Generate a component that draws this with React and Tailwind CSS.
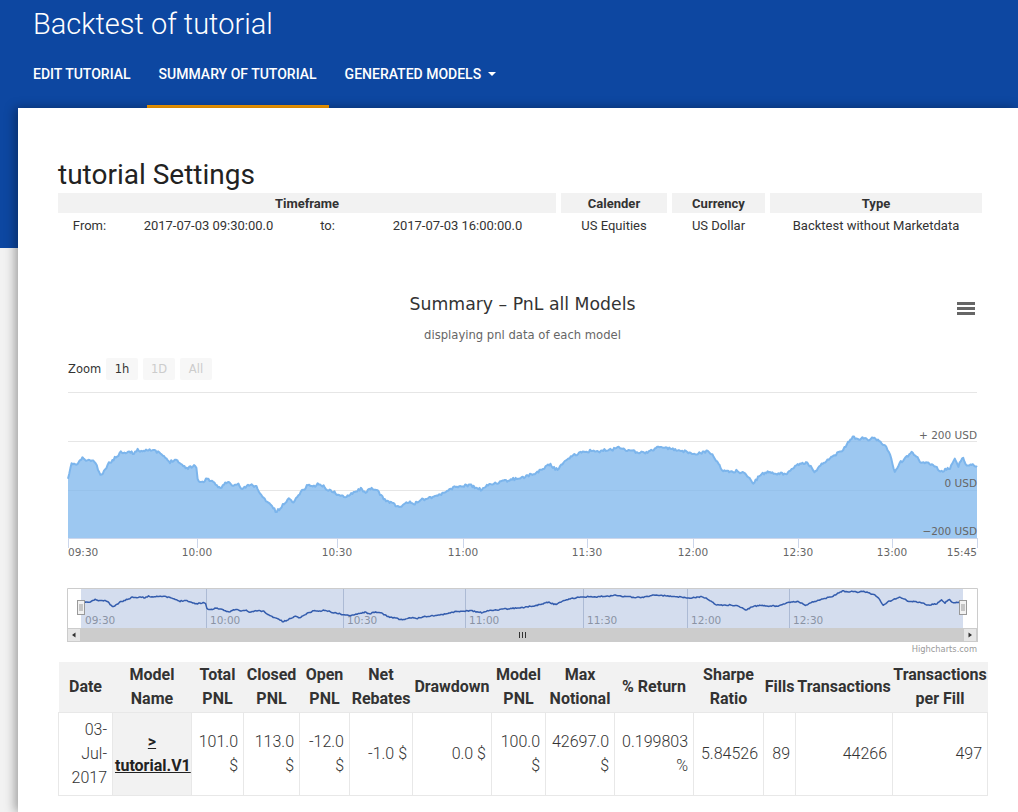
import React from 'react';

// rough shape of the pnl curve (page coordinates), noise is added on top
const KEY = [
  [68, 480], [70, 470], [72, 463], [77, 465], [82, 458], [88, 461], [93, 460], [97, 466], [100, 476], [104, 472],
  [108, 464], [113, 460], [118, 455], [121, 452], [128, 452], [134, 453], [137, 450], [143, 451], [148, 449], [154, 451],
  [160, 453], [165, 458], [170, 462], [175, 459], [178, 461], [183, 466], [188, 468], [193, 466], [196, 465], [198, 481],
  [202, 483], [207, 478], [212, 482], [216, 485], [220, 488], [224, 484], [228, 482], [233, 486], [238, 484], [242, 489],
  [247, 486], [252, 485], [257, 487], [262, 497], [268, 502], [272, 506], [276, 512], [281, 508], [285, 502], [289, 499],
  [294, 502], [299, 494], [304, 489], [309, 484], [313, 487], [318, 484], [323, 486], [328, 490], [334, 492], [338, 495],
  [344, 497], [350, 494], [356, 491], [361, 489], [366, 492], [371, 489], [377, 490], [382, 497], [387, 501], [393, 503],
  [398, 507], [403, 506], [408, 502], [414, 504], [420, 500], [428, 498], [435, 496], [442, 494], [448, 490], [455, 487],
  [462, 486], [470, 485], [476, 488], [482, 490], [488, 485], [495, 483], [502, 482], [510, 480], [518, 478], [525, 477],
  [532, 474], [538, 472], [545, 467], [550, 464], [554, 468], [558, 470], [563, 463], [568, 458], [575, 455], [582, 452],
  [590, 451], [597, 452], [605, 450], [612, 450], [618, 446], [624, 449], [630, 451], [637, 452], [645, 453], [652, 450],
  [658, 447], [665, 448], [672, 449], [680, 451], [688, 452], [695, 454], [700, 453], [708, 451], [713, 455], [717, 462],
  [722, 470], [730, 472], [736, 471], [743, 473], [748, 476], [753, 483], [757, 479], [760, 475], [765, 473], [770, 472],
  [778, 474], [787, 473], [793, 468], [800, 463], [807, 463], [811, 467], [815, 472], [820, 466], [827, 460], [833, 456],
  [840, 452], [846, 446], [850, 440], [853, 437], [858, 440], [863, 438], [868, 440], [873, 438], [878, 440], [882, 443],
  [886, 447], [889, 452], [892, 462], [895, 472], [898, 466], [900, 463], [906, 458], [912, 452], [916, 456], [920, 462],
  [926, 463], [933, 465], [937, 468], [940, 472], [945, 470], [950, 468], [953, 462], [955, 458], [957, 464], [958, 468],
  [961, 460], [963, 457], [965, 462], [967, 467], [972, 465], [977, 467],
];

function interp(x) {
  for (let i = 1; i < KEY.length; i++) {
    if (x <= KEY[i][0]) {
      const [x0, y0] = KEY[i - 1];
      const [x1, y1] = KEY[i];
      return y0 + ((y1 - y0) * (x - x0)) / (x1 - x0 || 1);
    }
  }
  return KEY[KEY.length - 1][1];
}

let seed = 11;
const rand = () => {
  seed = (seed * 16807) % 2147483647;
  return seed / 2147483647;
};

const PTS = [];
for (let x = 68; x < 977; x += 1.2) PTS.push([x, interp(x) + (rand() - 0.5) * 2.6]);
PTS.push([977, interp(977)]);

const LINE = PTS.map(([x, y], i) => `${i ? 'L' : 'M'}${x.toFixed(1)} ${y.toFixed(1)}`).join(' ');
const AREA = `M68 538 L${LINE.slice(1)} L977 538 Z`;
const NAV = PTS.map(
  ([x, y], i) => `${i ? 'L' : 'M'}${(81 + ((x - 68) * 882) / 909).toFixed(1)} ${(591 + (y - 437) * 0.41).toFixed(1)}`
).join(' ');

const XLABELS = [
  { x: 68, t: '09:30', a: 'start' },
  { x: 197, t: '10:00' },
  { x: 337, t: '10:30' },
  { x: 463, t: '11:00' },
  { x: 587, t: '11:30' },
  { x: 693, t: '12:00' },
  { x: 798, t: '12:30' },
  { x: 892, t: '13:00' },
  { x: 977, t: '15:45', a: 'end' },
];

const NAVGRID = [
  [206, '10:00'],
  [343, '10:30'],
  [465, '11:00'],
  [583, '11:30'],
  [687, '12:00'],
  [789, '12:30'],
];

const FONT = "'DejaVu Sans', sans-serif";

function PnlChart() {
  return (
    <svg width="929" height="380" viewBox="58 280 929 380" className="block" fontFamily={FONT}>
      <text x="522.5" y="310" textAnchor="middle" fontSize="17.3" fill="#333">
        Summary – PnL all Models
      </text>
      <text x="522.5" y="339" textAnchor="middle" fontSize="11.6" fill="#666">
        displaying pnl data of each model
      </text>
      {[302, 307, 312].map((y) => (
        <rect key={y} x="957" y={y} width="18" height="3" fill="#666" />
      ))}

      {/* range selector */}
      <text x="68" y="373" fontSize="11.5" fill="#333">Zoom</text>
      <rect x="106" y="358" width="32" height="22" rx="2" fill="#f7f7f7" />
      <text x="122" y="373" textAnchor="middle" fontSize="11.5" fill="#333">1h</text>
      <rect x="143" y="358" width="32" height="22" rx="2" fill="#f7f7f7" />
      <text x="159" y="373" textAnchor="middle" fontSize="11.5" fill="#ccc">1D</text>
      <rect x="180" y="358" width="32" height="22" rx="2" fill="#f7f7f7" />
      <text x="196" y="373" textAnchor="middle" fontSize="11.5" fill="#ccc">All</text>

      {/* plot */}
      {[392.5, 441.5, 490.5].map((y) => (
        <line key={y} x1="68" x2="977" y1={y} y2={y} stroke="#e6e6e6" />
      ))}
      <path d={AREA} fill="rgba(124,181,236,0.75)" />
      <path d={LINE} fill="none" stroke="#7cb5ec" strokeWidth="2" strokeLinejoin="round" />
      <text x="977" y="439" textAnchor="end" fontSize="10.5" fill="#666">+ 200 USD</text>
      <text x="977" y="487" textAnchor="end" fontSize="10.5" fill="#666">0 USD</text>
      <text x="977" y="535" textAnchor="end" fontSize="10.5" fill="#666">−200 USD</text>
      <line x1="68" x2="977" y1="538.5" y2="538.5" stroke="#ccd6eb" />
      {XLABELS.map((l) => (
        <g key={l.t}>
          <line x1={l.x + 0.5} x2={l.x + 0.5} y1="538" y2="548" stroke="#ccd6eb" />
          <text x={l.x} y="556" textAnchor={l.a || 'middle'} fontSize="10.5" fill="#666">
            {l.t}
          </text>
        </g>
      ))}

      {/* navigator */}
      {NAVGRID.map(([x, t]) => (
        <g key={t}>
          <line x1={x + 0.5} x2={x + 0.5} y1="588" y2="628" stroke="#c8cfdc" />
          <text x={x + 4} y="624" fontSize="10.5" fill="#999">{t}</text>
        </g>
      ))}
      <text x="85" y="624" fontSize="10.5" fill="#999">09:30</text>
      <rect x="81" y="588" width="882" height="40" fill="rgba(102,133,194,0.28)" />
      <path d={NAV} fill="none" stroke="#335cad" strokeWidth="1.5" strokeLinejoin="round" />
      <path d="M67.5 628 L67.5 588.5 L977.5 588.5 L977.5 628" fill="none" stroke="#ccc" />
      {[77, 959].map((x) => (
        <g key={x}>
          <rect x={x + 0.5} y="600.5" width="7" height="14" fill="#f2f2f2" stroke="#999" />
          <line x1={x + 3} x2={x + 3} y1="604" y2="611" stroke="#999" />
          <line x1={x + 5} x2={x + 5} y1="604" y2="611" stroke="#999" />
        </g>
      ))}

      {/* scrollbar */}
      <rect x="67" y="628" width="911" height="14" fill="#cccccc" />
      <rect x="67.5" y="628.5" width="13" height="13" fill="#e6e6e6" stroke="#ccc" />
      <path d="M75.5 632.5 L72 635 L75.5 637.5 Z" fill="#333" />
      <rect x="963.5" y="628.5" width="13" height="13" fill="#e6e6e6" stroke="#ccc" />
      <path d="M968.5 632.5 L972 635 L968.5 637.5 Z" fill="#333" />
      {[519.5, 522.5, 525.5].map((x) => (
        <line key={x} x1={x} x2={x} y1="632" y2="638" stroke="#333" />
      ))}

      <text x="977" y="652" textAnchor="end" fontSize="8.3" fill="#999">Highcharts.com</text>
    </svg>
  );
}

const COLS = [54, 79, 52, 56, 50, 63, 79, 54, 69, 79, 70, 32, 97, 95];

const HEAD = [
  ['Date'],
  ['Model', 'Name'],
  ['Total', 'PNL'],
  ['Closed', 'PNL'],
  ['Open', 'PNL'],
  ['Net', 'Rebates'],
  ['Drawdown'],
  ['Model', 'PNL'],
  ['Max', 'Notional'],
  ['% Return'],
  ['Sharpe', 'Ratio'],
  ['Fills'],
  ['Transactions'],
  ['Transactions', 'per Fill'],
];

const ROW = [
  ['03-', 'Jul-', '2017'],
  null,
  ['101.0', '$'],
  ['113.0', '$'],
  ['-12.0', '$'],
  ['-1.0 $'],
  ['0.0 $'],
  ['100.0', '$'],
  ['42697.0', '$'],
  ['0.199803', '%'],
  ['5.84526'],
  ['89'],
  ['44266'],
  ['497'],
];

function Lines({ parts }) {
  return parts.map((p, i) => (
    <React.Fragment key={i}>
      {i > 0 && <br />}
      {p}
    </React.Fragment>
  ));
}

export default function App() {
  return (
    <div className="min-h-[812px] bg-[#f2f2f2] font-['Roboto',sans-serif] overflow-hidden">
      <header className="h-[248px] bg-[#0d47a1] text-white">
        <div className="h-[48px] pl-[33px] text-[29px] font-light leading-[48px]">Backtest of tutorial</div>
        <nav className="flex h-[60px] gap-1 pl-[21px] text-[14px] font-medium uppercase">
          <div className="flex items-center border-b-[3px] border-transparent px-3 pb-[5px]">Edit tutorial</div>
          <div className="flex items-center border-b-[3px] border-[#ffa000] px-3 pb-[5px]">Summary of tutorial</div>
          <div className="flex items-center border-b-[3px] border-transparent px-3 pb-[5px]">
            Generated models
            <span className="ml-[7px] h-0 w-0 border-x-[4px] border-t-[4px] border-x-transparent border-t-white" />
          </div>
        </nav>
      </header>

      <main className="relative -mt-[140px] ml-[18px] min-h-[704px] bg-white pl-10 pr-[31px] pt-[51px] shadow-[-3px_0_10px_rgba(0,0,0,0.35)]">
        <h1 className="text-[28px] leading-[32px] text-[#222]">tutorial Settings</h1>

        <div className="mt-[2px] grid grid-cols-[498px_106px_93px_212px] gap-x-[5px] text-[13px] text-[#333]">
          {['Timeframe', 'Calender', 'Currency', 'Type'].map((h) => (
            <div key={h} className="h-5 bg-[#f2f2f2] pt-px text-center font-bold leading-5">
              {h}
            </div>
          ))}
          <div className="flex h-6 pt-px leading-6">
            <span className="w-[63px] text-center">From:</span>
            <span className="w-[175px] text-center">2017-07-03 09:30:00.0</span>
            <span className="w-[63px] text-center">to:</span>
            <span className="w-[197px] text-center">2017-07-03 16:00:00.0</span>
          </div>
          <div className="h-6 pt-px text-center leading-6">US Equities</div>
          <div className="h-6 pt-px text-center leading-6">US Dollar</div>
          <div className="h-6 pt-px text-center leading-6">Backtest without Marketdata</div>
        </div>

        <div className="mt-[43px]">
          <PnlChart />
        </div>

        <table className="mt-[2px] w-[929px] table-fixed border-collapse text-[16px]">
          <colgroup>
            {COLS.map((w, i) => (
              <col key={i} style={{ width: w }} />
            ))}
          </colgroup>
          <thead>
            <tr className="h-[50px] bg-[#f2f2f2]">
              {HEAD.map((h, i) => (
                <th key={i} className="px-0 text-center font-bold leading-6 text-[#333]">
                  <Lines parts={h} />
                </th>
              ))}
            </tr>
          </thead>
          <tbody>
            <tr>
              {ROW.map((c, i) =>
                c ? (
                  <td key={i} className="border border-[#e8e8e8] px-[5px] py-[5px] text-right align-middle leading-6 font-light text-[#333]">
                    <Lines parts={c} />
                  </td>
                ) : (
                  <td key={i} className="border border-[#e8e8e8] bg-[#f2f2f2] px-[2px] text-center align-middle font-bold leading-6 text-[#222] underline">
                    &gt;
                    <br />
                    tutorial.V1
                  </td>
                )
              )}
            </tr>
          </tbody>
        </table>
      </main>
    </div>
  );
}
